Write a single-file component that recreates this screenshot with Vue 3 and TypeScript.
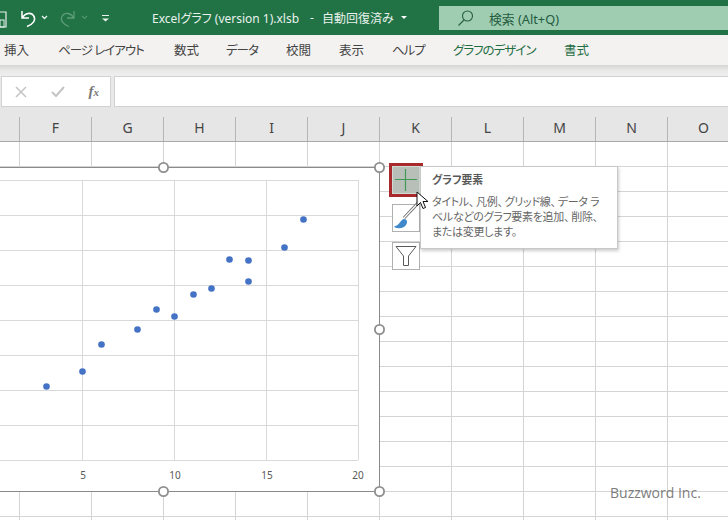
<script setup lang="ts">
const tabs: { label: string; w: number; green?: boolean; kana?: boolean }[] = [
  { label: '挿入', w: 54 },
  { label: 'ページ レイアウト', w: 116, kana: true },
  { label: '数式', w: 52 },
  { label: 'データ', w: 60, kana: true },
  { label: '校閲', w: 53 },
  { label: '表示', w: 53 },
  { label: 'ヘルプ', w: 61, kana: true },
  { label: 'グラフのデザイン', w: 111, green: true, kana: true },
  { label: '書式', w: 60, green: true },
]
const columns = ['F', 'G', 'H', 'I', 'J', 'K', 'L', 'M', 'N', 'O']
const xLabels = [
  { v: '5', x: 83 },
  { v: '10', x: 175 },
  { v: '15', x: 267 },
  { v: '20', x: 358 },
]
const vLines = [82, 174, 266, 358]
const hLines = [180, 215, 250, 285, 320, 355, 390, 425, 460]
const dots = [
  [46, 386], [82, 371], [101, 344], [137, 329], [156, 309], [174, 316], [193, 294],
  [211, 288], [229, 259], [248, 260], [248, 281], [284, 247], [303, 219],
]
const handles = [
  [163, 167], [379, 167], [379, 329], [163, 491], [379, 491],
]
</script>

<template>
  <div class="app">
    <header class="title">
      <svg class="qat" width="120" height="35" viewBox="0 0 120 35" fill="none">
        <path d="M-4 12H6V27H-4" stroke="#e8f1ec" stroke-width="1.2" />
        <rect x="0" y="20" width="4" height="7" stroke="#e8f1ec" />
        <path d="M22 11v7h7M22.500 17.500C25 13 31 12 33.500 15.500C36.500 20 33 24.500 27 26.500" stroke="#fff" stroke-width="1.5" />
        <path d="M42 16l2.500 2.500 2.500-2.500" stroke="#e8f1ec" stroke-width="1.3" />
        <path d="M74 11v7h-7M73.500 17.500C71 13 65 12 62.500 15.500C59.500 20 63 24.500 69 26.500" stroke="#5d9c79" stroke-width="1.3" />
        <path d="M82 16l2.500 2.500 2.500-2.500" stroke="#4f9570" stroke-width="1.2" />
        <path d="M102 15.500h7" stroke="#e8f1ec" stroke-width="1" />
        <path d="M102 18.500l3.500 3 3.500-3z" fill="#e8f1ec" />
      </svg>
      <div class="doc">
        <span class="doc-name">Excelグラフ (version 1).xlsb</span>
        <span class="doc-dash">-</span>
        <span>自動回復済み</span>
        <span class="caret"></span>
      </div>
      <div class="search">
        <svg width="18" height="18" viewBox="0 0 18 18" fill="none" stroke="#24603f" stroke-width="1.1">
          <circle cx="10.500" cy="7" r="5" />
          <path d="M7 11L1.500 16.500" />
        </svg>
        <span>検索 (Alt+Q)</span>
      </div>
    </header>

    <nav class="tabs">
      <span v-for="t in tabs" :key="t.label" class="tab" :class="{ green: t.green, kana: t.kana }" :style="{ width: t.w + 'px' }">{{ t.label }}</span>
    </nav>

    <div class="ribbon-shadow"></div>

    <div class="formula">
      <div class="fbtns">
        <svg width="12" height="12" viewBox="0 0 12 12" stroke="#c4c4c4" stroke-width="1.5"><path d="M1 1l10 10M11 1L1 11" /></svg>
        <svg width="14" height="12" viewBox="0 0 14 12" fill="none" stroke="#c4c4c4" stroke-width="2"><path d="M1 6l4 4 8-9" /></svg>
        <i class="fx">f<small>x</small></i>
      </div>
      <div class="finput"></div>
    </div>

    <div class="col-head">
      <span class="corner"></span>
      <span v-for="c in columns" :key="c" class="col">{{ c }}</span>
    </div>

    <main class="sheet">
      <div class="chart"></div>
      <svg class="plot" width="728" height="378" viewBox="0 142 728 378">
        <line v-for="x in vLines" :key="x" :x1="x + 0.5" :x2="x + 0.5" y1="180" y2="460" stroke="#d9d9d9" />
        <line v-for="y in hLines" :key="y" x1="0" x2="358" :y1="y + 0.5" :y2="y + 0.5" stroke="#d9d9d9" />
        <circle v-for="d in dots" :key="d[0] + '-' + d[1]" :cx="d[0] + 0.5" :cy="d[1] + 0.5" r="3.300" fill="#4472c4" />
        <text v-for="l in xLabels" :key="l.v" :x="l.x" y="479" text-anchor="middle" class="axis">{{ l.v }}</text>
        <circle v-for="h in handles" :key="h[0] + '-' + h[1]" :cx="h[0] + 0.5" :cy="h[1] + 0.5" r="4.600" fill="#fff" stroke="#8e8e8e" stroke-width="1.800" />
      </svg>

      <div class="tool active">
        <svg width="22" height="22" viewBox="0 0 22 22" stroke="#3f9a55" stroke-width="1.200"><path d="M10.500 0v22M0 10.500h22" /></svg>
      </div>
      <div class="tool brush">
        <svg width="28" height="34" viewBox="0 0 28 34" fill="none">
          <path d="M27 1L12 17" stroke="#6f6f6f" stroke-width="3" />
          <path d="M27 1L12 17" stroke="#fff" stroke-width="1.100" />
          <path d="M3 25C7 25 8 19 12 18C15 18 16 21 14 24C11 28 6 28 2 26Z" fill="#3f88c9" />
        </svg>
      </div>
      <div class="tool filter">
        <svg width="22" height="22" viewBox="0 0 22 22" fill="none" stroke="#5a5a5a" stroke-width="1"><path d="M1 1.500H21L13.500 11V20.500H8.500V11Z" /></svg>
      </div>

      <aside class="tip">
        <h4>グラフ要素</h4>
        <p>タイトル<span class="c">、</span>凡例<span class="c">、</span>グリッド線<span class="c">、</span>データ ラ<br />ベルなどのグラフ要素を追加<span class="c">、</span>削除<span class="c">、</span><br />または変更します<span class="c">。</span></p>
      </aside>

      <svg class="cursor" width="14" height="20" viewBox="0 0 14 20">
        <path d="M1 1V15L4.500 11.500L7 17.500L9.500 16.500L7 10.500H12Z" fill="#fff" stroke="#111" stroke-width="1" />
      </svg>

      <span class="mark">Buzzword Inc.</span>
    </main>
  </div>
</template>

<style scoped>
.app {
  width: 728px;
  height: 520px;
  overflow: hidden;
  display: flex;
  flex-direction: column;
  font-family: "Noto Sans", "Noto Sans CJK JP", sans-serif;
  font-feature-settings: "palt";
  background: #fff;
}
.title {
  flex: 0 0 35px;
  display: flex;
  background: #217346;
  color: #e9f2ed;
  position: relative;
}
.qat { flex: none; }
.doc {
  position: absolute;
  left: 152px;
  top: 0;
  height: 35px;
  display: flex;
  align-items: center;
  font-size: 12px;
  white-space: nowrap;
}
.doc-name { width: 150px; }
.doc-dash { width: 20px; text-align: center; }
.caret {
  margin-left: 7px;
  border: 3px solid transparent;
  border-top: 3px solid #fff;
  border-bottom: 0;
}
.search {
  position: absolute;
  left: 439px;
  top: 6px;
  right: 0;
  height: 24px;
  background: #9fcdb2;
  display: flex;
  align-items: center;
  gap: 14px;
  padding-left: 18px;
  font-size: 12.800px;
  color: #245c40;
}
.tabs {
  flex: 0 0 30px;
  box-sizing: border-box;
  padding-bottom: 2px;
  display: flex;
  align-items: center;
  background: #f3f2f1;
  font-size: 12.500px;
  color: #444;
  white-space: nowrap;
}
.tab { flex: none; text-align: left; padding-left: 4px; box-sizing: border-box; }
.tab.kana { letter-spacing: -1px; }
.tab.green { color: #1f6e43; }
.ribbon-shadow {
  flex: 0 0 11px;
  background: linear-gradient(#d6d6d5, #e9e9e9 50%, #eeeeee);
}
.formula {
  flex: 0 0 31px;
  display: flex;
  gap: 3px;
  box-sizing: border-box;
  padding-left: 1px;
  background: #e9e9e9;
}
.fbtns, .finput {
  background: #fff;
  border: 1px solid #d2d2d2;
  box-sizing: border-box;
}
.fbtns {
  width: 110px;
  display: flex;
  align-items: center;
  justify-content: space-between;
  padding: 0 11px 0 13px;
}
.fx {
  font-family: "Liberation Serif", serif;
  font-size: 15px;
  font-weight: bold;
  color: #777;
}
.fx small { font-size: 11px; }
.finput { flex: 1; border-right: 0; }
.col-head {
  flex: 0 0 35px;
  box-sizing: border-box;
  padding-top: 10px;
  display: flex;
  background: #e6e6e6;
  border-bottom: 1px solid #a8a8a8;
  font-size: 14px;
  color: #444;
}
.corner { flex: 0 0 19px; }
.col {
  flex: 0 0 72px;
  box-sizing: border-box;
  border-left: 1px solid #b5b5b5;
  text-align: center;
  line-height: 22px;
}
.sheet {
  flex: 1;
  min-height: 0;
  position: relative;
  background-color: #fff;
  background-image:
    linear-gradient(to right, #d4d4d4 1px, transparent 1px),
    linear-gradient(to bottom, #d4d4d4 1px, transparent 1px);
  background-size: 72px 25px;
  background-position: 19px 0, 0 24px;
}
.chart {
  position: absolute;
  left: -4px;
  top: 25px;
  width: 382px;
  height: 323px;
  background: #fff;
  border: 1px solid #8a8a8a;
  box-sizing: content-box;
}
.plot {
  position: absolute;
  left: 0;
  top: 0;
}
.axis {
  font-family: "Noto Sans", sans-serif;
  font-size: 10px;
  fill: #595959;
}
.tool {
  position: absolute;
  left: 392px;
  width: 28px;
  height: 28px;
  box-sizing: border-box;
  background: #fff;
  border: 1px solid #b0b0b0;
  display: flex;
  align-items: center;
  justify-content: center;
}
.tool.active {
  left: 389px;
  top: 21px;
  width: 34px;
  height: 34px;
  background: #b7bfb8;
  border: 3px solid #a92a2c;
  box-shadow: inset 0 0 0 1px #cfdccf;
}
.tool.brush { top: 62px; overflow: visible; }
.tool.brush svg { position: absolute; left: -1px; top: -4px; }
.tool.filter { top: 100px; }
.tip {
  position: absolute;
  left: 420px;
  top: 24px;
  width: 198px;
  height: 83px;
  box-sizing: border-box;
  background: #fff;
  border: 1px solid #c8c8c8;
  box-shadow: 1px 2px 3px rgba(0, 0, 0, 0.2);
  padding: 5px 0 0 11px;
  color: #666;
  white-space: nowrap;
}
.tip h4 {
  margin: 0 0 7px;
  font-size: 10.800px;
  line-height: 15px;
  color: #595959;
  font-weight: 700;
}
.tip p {
  margin: 0;
  font-size: 11px;
  line-height: 15px;
  letter-spacing: -0.3px;
}
.tip .c { margin-right: 2px; }
.cursor {
  position: absolute;
  left: 416px;
  top: 49px;
}
.mark {
  position: absolute;
  left: 610px;
  top: 342px;
  font-size: 14px;
  line-height: 18px;
  color: rgba(100, 100, 100, 0.85);
  font-family: "Open Sans", "Noto Sans", sans-serif;
}
</style>
